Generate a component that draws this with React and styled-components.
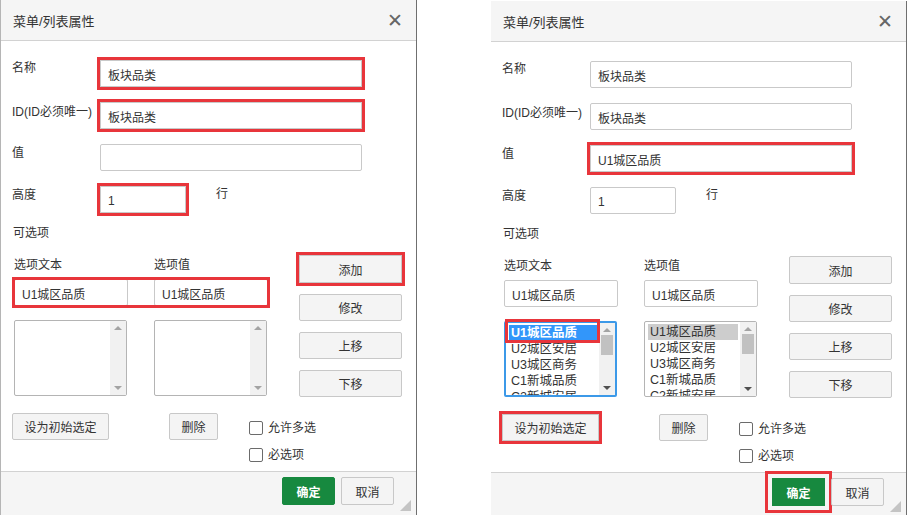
import React from "react";
import styled, { createGlobalStyle, css } from "styled-components";

const GlobalStyle = createGlobalStyle`
  html, body {
    margin: 0;
    padding: 0;
    background: #fff;
  }
  body {
    font-family: "Liberation Sans", "Noto Sans CJK SC", sans-serif;
    font-size: 12px;
    color: #333;
  }
`;

const RED = "#e8353b";

// red annotation boxes are square, so drop the radius or the outline rounds too
const mark = css`
  outline: 3px solid ${RED};
  outline-offset: ${(p) => (p.$offset != null ? p.$offset : 0)}px;
  border-radius: 0;
`;

const Page = styled.div`
  display: flex;
  gap: 73px;
  width: 907px;
  height: 515px;
  overflow: hidden;
`;

const Dialog = styled.div`
  width: 417px;
  height: 515px;
  flex-shrink: 0;
  display: flex;
  flex-direction: column;
  background: #fff;
  border-right: 1px solid #6f6f6f;
  border-left: 1px solid ${(p) => (p.$first ? "#b5b5b5" : "#fff")};
  margin-top: ${(p) => (p.$first ? 0 : 1)}px;
  box-sizing: border-box;
`;

const Header = styled.div`
  height: 40px;
  flex-shrink: 0;
  display: flex;
  align-items: center;
  justify-content: space-between;
  padding: 0 13px 0 12px;
  background: #f5f5f5;
  border-bottom: 1px solid #d2d2d2;
`;

const Title = styled.div`
  font-size: 13px;
  color: #333;
`;

const Close = styled.div`
  font-size: 19px;
  font-weight: bold;
  color: #666;
  line-height: 1;
  font-family: "DejaVu Sans", sans-serif;
`;

const Body = styled.div`
  flex: 1;
  padding: 19px 14px 0 11px;
  display: flex;
  flex-direction: column;
`;

const FormRow = styled.div`
  display: flex;
  align-items: flex-start;
  margin-bottom: 15px;
`;

const Label = styled.div`
  width: 88px;
  flex-shrink: 0;
  line-height: 16px;
  padding-top: ${(p) => p.$top || 0}px;
  white-space: nowrap;
`;

const TextInput = styled.div`
  box-sizing: border-box;
  width: ${(p) => p.$w}px;
  height: 27px;
  border: 1px solid #c9c9c9;
  border-radius: 2px;
  padding: 2px 7px 0;
  display: flex;
  align-items: center;
  background: #fff;
  ${(p) => p.$marked && mark}
`;

const Unit = styled.div`
  margin-left: 30px;
  line-height: 16px;
`;

const Section = styled.div`
  line-height: 16px;
  margin: -3px 0 14px 1px;
`;

const Lower = styled.div`
  display: flex;
  justify-content: space-between;
`;

const Options = styled.div`
  padding-top: 5px;
  display: grid;
  grid-template-columns: 114px 114px;
  column-gap: 26px;
  margin-left: 2px;
`;

const ColLabel = styled.div`
  line-height: 16px;
  margin-top: -3px;
  margin-bottom: 5px;
`;

const OptionInputs = styled.div`
  grid-column: 1 / span 2;
  display: grid;
  grid-template-columns: 114px 114px;
  column-gap: 26px;
  ${(p) => p.$marked && mark}
  outline-offset: -1px;
`;

const ListBox = styled.div`
  position: relative;
  box-sizing: border-box;
  margin-top: 14px;
  width: 113px;
  height: 76px;
  border: ${(p) => (p.$focus ? "2px solid #3c99e8" : "1px solid #b4b4b4")};
  border-radius: 2px;
  display: flex;
`;

const Items = styled.div`
  flex: 1;
  overflow: hidden;
  padding: 2px 2px 0 3px;
`;

const Item = styled.div`
  line-height: 16px;
  height: 16px;
  padding-left: 2px;
  white-space: nowrap;
  font-size: 12.5px;
  ${(p) =>
    p.$sel === "active" &&
    css`
      background: #3296fa;
      color: #fff;
      font-weight: bold;
    `}
  ${(p) =>
    p.$sel === "inactive" &&
    css`
      background: #cdcdcd;
    `}
`;

const ItemMark = styled.div`
  position: absolute;
  left: -1px;
  top: -4px;
  width: 89px;
  height: 18px;
  border: 3px solid ${RED};
`;

const Scroll = styled.div`
  width: 16px;
  flex-shrink: 0;
  background: #f1f1f1;
  display: flex;
  flex-direction: column;
  align-items: center;
  justify-content: space-between;
  padding: 5px 0;
  box-sizing: border-box;
`;

const Arrow = styled.div`
  width: 0;
  height: 0;
  border-left: 4px solid transparent;
  border-right: 4px solid transparent;
  ${(p) =>
    p.$down
      ? css`border-top: 4px solid ${p.$dark ? "#505050" : "#a3a3a3"};`
      : css`border-bottom: 4px solid ${p.$dark ? "#505050" : "#a3a3a3"};`}
`;

const Thumb = styled.div`
  width: 12px;
  height: 20px;
  background: #c1c1c1;
  margin-top: 3px;
  margin-bottom: auto;
`;

const Buttons = styled.div`
  display: flex;
  flex-direction: column;
  gap: 11px;
`;

const Btn = styled.button`
  box-sizing: border-box;
  height: ${(p) => p.$h || 27}px;
  width: ${(p) => p.$w}px;
  margin-left: ${(p) => p.$ml || 0}px;
  border: 1px solid #c8c8c8;
  border-radius: 2px;
  background: #f4f4f4;
  color: #333;
  font-family: inherit;
  font-size: 12px;
  padding: 0;
  ${(p) => p.$marked && mark}
`;

const BottomRow = styled.div`
  display: flex;
  align-items: flex-start;
  margin-top: 16px;
`;

const Checks = styled.div`
  display: flex;
  flex-direction: column;
  gap: 11px;
  padding-top: 7px;
  margin-left: 31px;
`;

const CheckLine = styled.label`
  display: flex;
  align-items: center;
  gap: 5px;
  line-height: 16px;
`;

const Box = styled.span`
  width: 12px;
  height: 12px;
  border: 1px solid #6b6b6b;
  border-radius: 2px;
  background: #fff;
`;

const Footer = styled.div`
  height: 38px;
  flex-shrink: 0;
  background: #f5f5f5;
  border-top: 1px solid #d2d2d2;
  display: flex;
  justify-content: flex-end;
  align-items: flex-start;
  padding: 5px 5px 0 0;
  gap: 6px;
`;

const OkBtn = styled(Btn)`
  background: #17893f;
  border-color: #17893f;
  color: #fff;
  font-weight: bold;
`;

const Grip = styled.div`
  align-self: flex-end;
  margin-bottom: 4px;
  width: 0;
  height: 0;
  border-left: 11px solid transparent;
  border-bottom: 11px solid #c4c4c4;
`;

const ScrollBar = ({ filled }) => (
  <Scroll>
    <Arrow />
    {filled && <Thumb />}
    <Arrow $down $dark={filled} />
  </Scroll>
);

const PropDialog = ({ first, value, items, marks }) => {
  const m = marks || {};
  const filled = items.length > 0;
  return (
    <Dialog $first={first}>
      <Header>
        <Title>菜单/列表属性</Title>
        <Close>✕</Close>
      </Header>
      <Body>
        <FormRow>
          <Label $top={0}>名称</Label>
          <TextInput $w={262} $marked={m.name}>板块品类</TextInput>
        </FormRow>
        <FormRow>
          <Label $top={2}>ID(ID必须唯一)</Label>
          <TextInput $w={262} $marked={m.id}>板块品类</TextInput>
        </FormRow>
        <FormRow>
          <Label $top={1}>值</Label>
          <TextInput $w={262} $marked={m.value}>{value}</TextInput>
        </FormRow>
        <FormRow>
          <Label $top={1}>高度</Label>
          <TextInput $w={86} $marked={m.height}>1</TextInput>
          <Unit>行</Unit>
        </FormRow>
        <Section>可选项</Section>
        <Lower>
          <Options>
            <ColLabel>选项文本</ColLabel>
            <ColLabel>选项值</ColLabel>
            <OptionInputs $marked={m.optInputs}>
              <TextInput $w={114}>U1城区品质</TextInput>
              <TextInput $w={114}>U1城区品质</TextInput>
            </OptionInputs>
            <ListBox $focus={filled}>
              <Items>
                {items.map((t, i) => (
                  <Item key={t} $sel={i === 0 ? "active" : null}>{t}</Item>
                ))}
              </Items>
              {m.item && <ItemMark />}
              <ScrollBar filled={filled} />
            </ListBox>
            <ListBox>
              <Items>
                {items.map((t, i) => (
                  <Item key={t} $sel={i === 0 ? "inactive" : null}>{t}</Item>
                ))}
              </Items>
              <ScrollBar filled={filled} />
            </ListBox>
          </Options>
          <Buttons>
            <Btn $w={103} $h={28} $marked={m.add}>添加</Btn>
            <Btn $w={103}>修改</Btn>
            <Btn $w={103}>上移</Btn>
            <Btn $w={103}>下移</Btn>
          </Buttons>
        </Lower>
        <BottomRow>
          <Btn $w={97} $marked={m.init}>设为初始选定</Btn>
          <Btn $w={49} $ml={60}>删除</Btn>
          <Checks>
            <CheckLine><Box />允许多选</CheckLine>
            <CheckLine><Box />必选项</CheckLine>
          </Checks>
        </BottomRow>
      </Body>
      <Footer>
        <OkBtn $w={53} $h={28} $marked={m.ok} $offset={4}>确定</OkBtn>
        <Btn $w={53} $h={28}>取消</Btn>
        <Grip />
      </Footer>
    </Dialog>
  );
};

const list = ["U1城区品质", "U2城区安居", "U3城区商务", "C1新城品质", "C2新城安居"];

export default function App() {
  return (
    <>
      <GlobalStyle />
      <Page>
        <PropDialog
          first
          value=""
          items={[]}
          marks={{ name: true, id: true, height: true, add: true, optInputs: true }}
        />
        <PropDialog
          value="U1城区品质"
          items={list}
          marks={{ value: true, item: true, init: true, ok: true }}
        />
      </Page>
    </>
  );
}
